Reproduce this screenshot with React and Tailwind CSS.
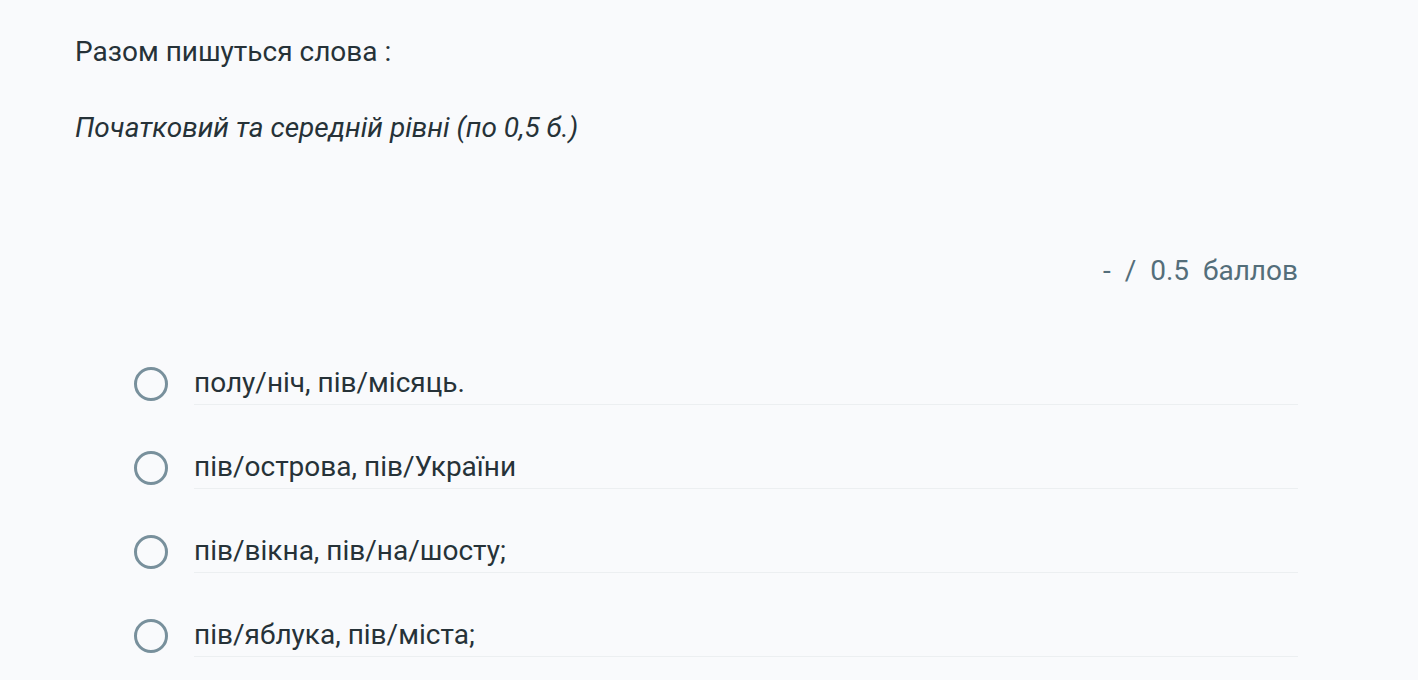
export default function App() {
  const options = [
    "полу/ніч, пів/місяць.",
    "пів/острова, пів/України",
    "пів/вікна, пів/на/шосту;",
    "пів/яблука, пів/міста;",
  ];
  return (
    <div
      className="w-[1418px] h-[680px] overflow-hidden bg-[#f9fafc] text-[#263238]"
      style={{ fontFamily: "Roboto, 'Noto Sans', sans-serif" }}
    >
      <div className="pl-[75px] w-[1298px] pt-[34px]">
        <div className="text-[28px] leading-[36px]">Разом пишуться слова :</div>
        <div className="mt-[40px] text-[28px] leading-[36px] italic">
          Початковий та середній рівні (по 0,5 б.)
        </div>
        <div className="mt-[107px] flex justify-end text-[28px] leading-[36px] text-[#546e7a] whitespace-pre">
          {"-  /  0.5  баллов"}
        </div>
        <div className="mt-[73px] flex flex-col gap-[41px]">
          {options.map((o) => (
            <div key={o} className="flex items-center pl-[59px]">
              <div className="w-[34px] h-[34px] rounded-full border-[3px] border-[#78909c] shrink-0" />
              <div className="ml-[26px] flex-1 py-[3px] border-b border-[#eceff1] text-[28px] leading-[36px]">
                {o}
              </div>
            </div>
          ))}
        </div>
      </div>
    </div>
  );
}
